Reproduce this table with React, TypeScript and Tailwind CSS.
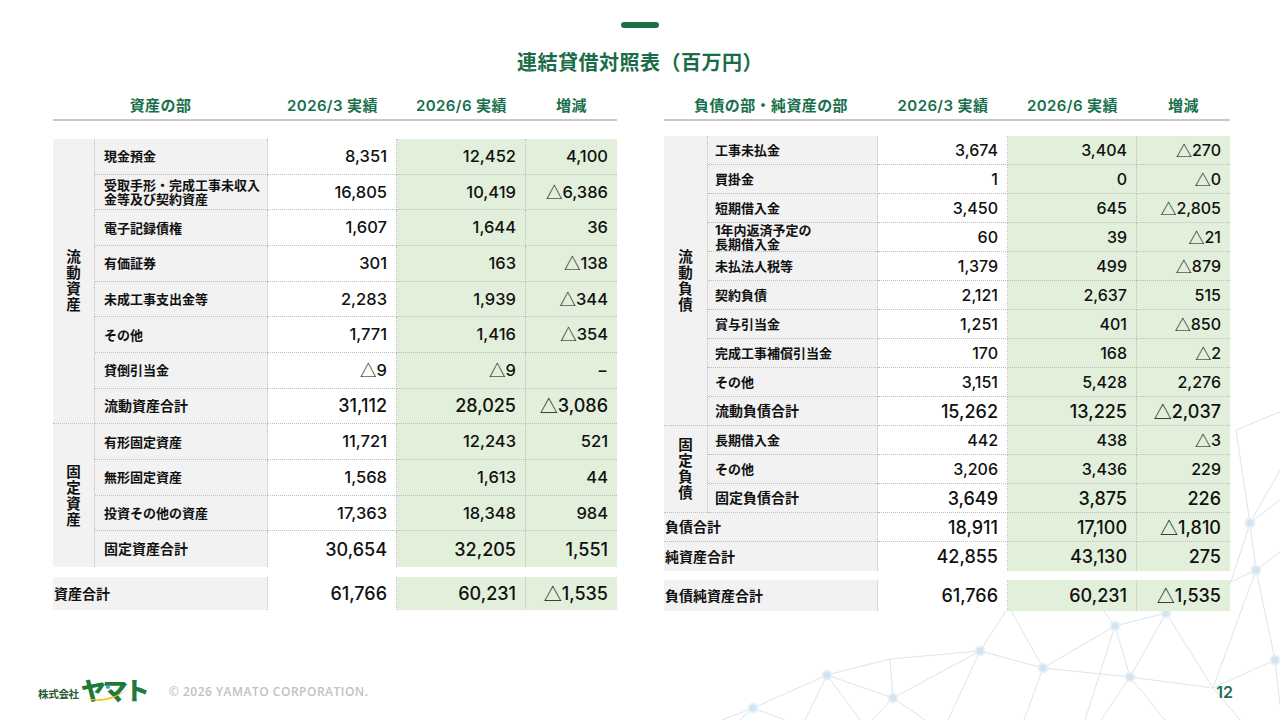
import React from 'react';

type Row = { label: string; a: string; b: string; c: string; total?: boolean; span?: boolean };

const leftRows: Row[] = [
  { label: '現金預金', a: '8,351', b: '12,452', c: '4,100' },
  { label: '受取手形・完成工事未収入\n金等及び契約資産', a: '16,805', b: '10,419', c: '△6,386' },
  { label: '電子記録債権', a: '1,607', b: '1,644', c: '36' },
  { label: '有価証券', a: '301', b: '163', c: '△138' },
  { label: '未成工事支出金等', a: '2,283', b: '1,939', c: '△344' },
  { label: 'その他', a: '1,771', b: '1,416', c: '△354' },
  { label: '貸倒引当金', a: '△9', b: '△9', c: '−' },
  { label: '流動資産合計', a: '31,112', b: '28,025', c: '△3,086', total: true },
  { label: '有形固定資産', a: '11,721', b: '12,243', c: '521' },
  { label: '無形固定資産', a: '1,568', b: '1,613', c: '44' },
  { label: '投資その他の資産', a: '17,363', b: '18,348', c: '984' },
  { label: '固定資産合計', a: '30,654', b: '32,205', c: '1,551', total: true },
];

const rightRows: Row[] = [
  { label: '工事未払金', a: '3,674', b: '3,404', c: '△270' },
  { label: '買掛金', a: '1', b: '0', c: '△0' },
  { label: '短期借入金', a: '3,450', b: '645', c: '△2,805' },
  { label: '1年内返済予定の\n長期借入金', a: '60', b: '39', c: '△21' },
  { label: '未払法人税等', a: '1,379', b: '499', c: '△879' },
  { label: '契約負債', a: '2,121', b: '2,637', c: '515' },
  { label: '賞与引当金', a: '1,251', b: '401', c: '△850' },
  { label: '完成工事補償引当金', a: '170', b: '168', c: '△2' },
  { label: 'その他', a: '3,151', b: '5,428', c: '2,276' },
  { label: '流動負債合計', a: '15,262', b: '13,225', c: '△2,037', total: true },
  { label: '長期借入金', a: '442', b: '438', c: '△3' },
  { label: 'その他', a: '3,206', b: '3,436', c: '229' },
  { label: '固定負債合計', a: '3,649', b: '3,875', c: '226', total: true },
  { label: '負債合計', a: '18,911', b: '17,100', c: '△1,810', total: true, span: true },
  { label: '純資産合計', a: '42,855', b: '43,130', c: '275', total: true, span: true },
];

const dot = 'border-dotted border-[#bdbdbd]';
const GRAY = 'bg-[#f2f2f2]';
const GREEN = 'bg-[#e2efda]';

function Val({ v }: { v: string }) {
  if (v.startsWith('△')) {
    return (
      <>
        <span className="font-['Noto_Sans_CJK_JP'] font-normal">△</span>
        {v.slice(1)}
      </>
    );
  }
  return <>{v}</>;
}

function Label({ text }: { text: string }) {
  const parts = text.split('\n');
  return (
    <span className="leading-[14px]">
      {parts.map((p, i) => (
        <React.Fragment key={i}>
          {p}
          {i < parts.length - 1 && <br />}
        </React.Fragment>
      ))}
    </span>
  );
}

function Group({ label, cls }: { label: string; cls: string }) {
  return (
    <div className={`col-start-1 ${GRAY} border-r ${dot} flex items-center justify-center ${cls}`}>
      <div className="flex flex-col items-center text-[14.5px] leading-[16px] font-bold text-[#111]">
        {label.split('').map((ch, i) => (
          <span key={i}>{ch}</span>
        ))}
      </div>
    </div>
  );
}

function Cells({ r, last, big, norm, pl }: { r: Row; last: boolean; big: string; norm: string; pl: string }) {
  const bb = last ? '' : 'border-b';
  const vsize = r.total ? big : norm;
  return (
    <>
      <div
        className={`${r.span ? 'col-span-2' : ''} ${GRAY} flex items-center ${r.span ? 'pl-[1px]' : pl} border-r ${bb} ${dot} font-bold text-[#111] ${
          r.total ? 'text-[14px]' : 'text-[13px]'
        }`}
      >
        <Label text={r.label} />
      </div>
      <div className={`bg-white flex items-center justify-end pr-[9px] border-r ${bb} ${dot} ${vsize}`}>
        <Val v={r.a} />
      </div>
      <div className={`${GREEN} flex items-center justify-end pr-[9px] border-r ${bb} ${dot} ${vsize}`}>
        <Val v={r.b} />
      </div>
      <div className={`${GREEN} flex items-center justify-end pr-[9px] ${bb} ${dot} ${vsize}`}>
        <Val v={r.c} />
      </div>
    </>
  );
}

function Header({ cols, first }: { cols: string; first: string }) {
  return (
    <div
      className={`grid ${cols} h-[28px] border-b-2 border-[#c9c9c9] items-center text-center text-[15px] tracking-[0.4px] font-semibold text-[#17704b]`}
    >
      <div>{first}</div>
      <div>2026/3 実績</div>
      <div>2026/6 実績</div>
      <div>増減</div>
    </div>
  );
}

function TotalRow({ cols, h, label, a, b, c, size }: { cols: string; h: string; label: string; a: string; b: string; c: string; size: string }) {
  return (
    <div className={`grid ${cols} ${h}`}>
      <div className={`${GRAY} flex items-center pl-[1px] border-r ${dot} text-[14px] font-bold text-[#111]`}>{label}</div>
      <div className={`bg-white flex items-center justify-end pr-[9px] border-r ${dot} ${size}`}>
        <Val v={a} />
      </div>
      <div className={`${GREEN} flex items-center justify-end pr-[9px] border-r ${dot} ${size}`}>
        <Val v={b} />
      </div>
      <div className={`${GREEN} flex items-center justify-end pr-[9px] ${size}`}>
        <Val v={c} />
      </div>
    </div>
  );
}

function LeftTable() {
  return (
    <div className="w-[564px]">
      <Header cols="grid-cols-[215px_129px_129px_91px]" first="資産の部" />
      <div className="mt-[18px] grid grid-cols-[42px_173px_129px_129px_91px] grid-rows-[repeat(12,minmax(0,1fr))] h-[428px] font-[550] text-[#111]">
        <Group label="流動資産" cls="row-start-1 row-span-8 border-b" />
        <Group label="固定資産" cls="row-start-9 row-span-4" />
        {leftRows.map((r, i) => (
          <Cells key={i} r={r} last={i === leftRows.length - 1} big="text-[18px]" norm="text-[16.5px]" pl="pl-[9px]" />
        ))}
      </div>
      <div className="mt-[10px] font-[550] text-[#111]">
        <TotalRow cols="grid-cols-[215px_129px_129px_91px]" h="h-[33px]" label="資産合計" a="61,766" b="60,231" c="△1,535" size="text-[18px]" />
      </div>
    </div>
  );
}

function RightTable() {
  return (
    <div className="w-[566px]">
      <Header cols="grid-cols-[214px_130px_129px_93px]" first="負債の部・純資産の部" />
      <div className="mt-[15px] grid grid-cols-[44px_170px_130px_129px_93px] grid-rows-[repeat(15,minmax(0,1fr))] h-[435px] font-[550] text-[#111]">
        <Group label="流動負債" cls="row-start-1 row-span-10 border-b" />
        <Group label="固定負債" cls="row-start-11 row-span-3 border-b" />
        {rightRows.map((r, i) => (
          <Cells key={i} r={r} last={i === rightRows.length - 1} big="text-[18px]" norm="text-[16px]" pl="pl-[7px]" />
        ))}
      </div>
      <div className="mt-[9px] font-[550] text-[#111]">
        <TotalRow cols="grid-cols-[214px_130px_129px_93px]" h="h-[31px]" label="負債純資産合計" a="61,766" b="60,231" c="△1,535" size="text-[18px]" />
      </div>
    </div>
  );
}

const nodes: [number, number][] = [
  [980, 651], [1043, 668], [1115, 626], [1166, 613], [1130, 677], [893, 698], [827, 675], [753, 708], [1256, 570], [1250, 523], [1275, 660],
];

const lines: [number, number, number, number][] = [
  [890, 659, 980, 651], [890, 659, 893, 698], [980, 651, 893, 698], [980, 651, 1043, 668], [980, 651, 948, 720], [980, 651, 1013, 600],
  [1043, 668, 1115, 626], [1043, 668, 1130, 677], [1043, 668, 1024, 720], [1043, 668, 1005, 600],
  [1115, 626, 1166, 613], [1115, 626, 1130, 677], [1115, 626, 1085, 720], [1115, 626, 1095, 600],
  [1166, 613, 1130, 677], [1166, 613, 1213, 688], [1166, 613, 1256, 570], [1166, 613, 1150, 600],
  [1130, 677, 1213, 688], [1130, 677, 1101, 720], [1130, 677, 1165, 720],
  [1213, 688, 1256, 570], [1213, 688, 1275, 660], [1213, 688, 1240, 720],
  [1256, 570, 1275, 660], [1256, 570, 1250, 523], [1256, 570, 1280, 552], [1275, 660, 1280, 705],
  [1250, 523, 1280, 500], [1250, 523, 1236, 430], [1250, 523, 1280, 470], [1236, 430, 1280, 412], [1250, 523, 1225, 600],
  [827, 675, 890, 659], [827, 675, 893, 698], [827, 675, 753, 708], [827, 675, 860, 720], [827, 675, 805, 720],
  [753, 708, 722, 720], [753, 708, 785, 720], [893, 698, 872, 720], [893, 698, 925, 720], [753, 708, 740, 720],
];

function Network() {
  return (
    <svg className="absolute inset-0 w-[1280px] h-[720px]" viewBox="0 0 1280 720">
      <g stroke="#d9e5ef" strokeWidth="1" fill="none">
        {lines.map((l, i) => (
          <line key={i} x1={l[0]} y1={l[1]} x2={l[2]} y2={l[3]} />
        ))}
      </g>
      {nodes.map((n, i) => (
        <g key={i}>
          <circle cx={n[0]} cy={n[1]} r="5.5" fill="#e9f1f8" />
          <circle cx={n[0]} cy={n[1]} r="3.5" fill="#d2e3f1" />
        </g>
      ))}
    </svg>
  );
}

function Logo() {
  return (
    <div className="flex items-end h-[26px]">
      <span className="text-[10.5px] leading-none font-bold text-[#2b5a33] mb-[5px] tracking-[-0.3px]">株式会社</span>
      <div className="relative ml-[2px] h-[26px] w-[66px]">
        <span className="absolute left-0 top-[-2px] text-[25px] leading-[28px] font-black text-[#1e7a3a] tracking-[-3px]">ヤマト</span>
        <svg className="absolute left-0 top-0 w-[66px] h-[26px]" viewBox="0 0 66 26">
          <path d="M5 19 Q 24 28 49 9 Q 27 24 5 19 Z" fill="#f0c20a" />
          <circle cx="27" cy="8" r="2" fill="#3a9fd8" />
        </svg>
      </div>
    </div>
  );
}

export default function App() {
  return (
    <div className="relative w-[1280px] h-[720px] bg-white overflow-hidden font-['Inter','Noto_Sans_CJK_JP',sans-serif]">
      <Network />
      <div className="relative flex flex-col h-[720px]">
        <div className="flex flex-col items-center pt-[22px]">
          <div className="w-[38px] h-[6px] rounded-full bg-[#18704a]" />
          <h1 className="mt-[20px] text-[20px] leading-[28px] tracking-[0.5px] font-bold text-[#1a6b47] font-['Noto_Sans_CJK_JP',sans-serif]">
            連結貸借対照表（百万円）
          </h1>
        </div>
        <div className="mt-[17px] flex justify-between pl-[53px] pr-[50px]">
          <LeftTable />
          <RightTable />
        </div>
        <div className="mt-auto mb-[13px] h-[30px] flex items-center pl-[38px] pr-[47px]">
          <Logo />
          <span className="ml-[22px] text-[12px] font-semibold tracking-[0.5px] text-[#c2c2c2] font-['Open_Sans',sans-serif]">
            © 2026 YAMATO CORPORATION.
          </span>
          <span className="ml-auto text-[16px] font-semibold text-[#1d6e55]">12</span>
        </div>
      </div>
    </div>
  );
}
